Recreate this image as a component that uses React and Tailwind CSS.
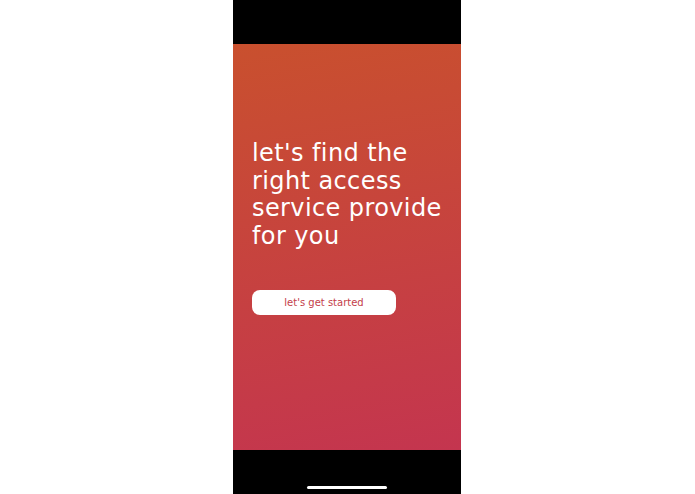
import React from 'react';

const App = () => {
  return (
    <div className="w-[695px] h-[494px] bg-white flex pl-[233px]">
      <div className="w-[228px] h-full flex flex-col bg-black">
        <div className="h-[44px] shrink-0" />
        <div className="flex-1 bg-[linear-gradient(170deg,#c9502e,#c4354f)] px-[19px] pt-[96px]">
          <h1 className="text-white text-[24px] leading-[27.5px] font-normal tracking-[0.4px]" style={{ fontFamily: '"DejaVu Sans", "Noto Sans", sans-serif' }}>
            let's find the<br />right access<br />service provide<br />for you
          </h1>
          <button className="mt-[40px] w-[144px] h-[25px] bg-white rounded-[8px] text-[10px] text-[#c4404a]" style={{ fontFamily: '"DejaVu Sans", "Noto Sans", sans-serif' }}>
            let's get started
          </button>
        </div>
        <div className="h-[44px] shrink-0 flex items-end justify-center pb-[5px]">
          <div className="w-[80px] h-[3px] rounded-full bg-white" />
        </div>
      </div>
    </div>
  );
};

export default App;
